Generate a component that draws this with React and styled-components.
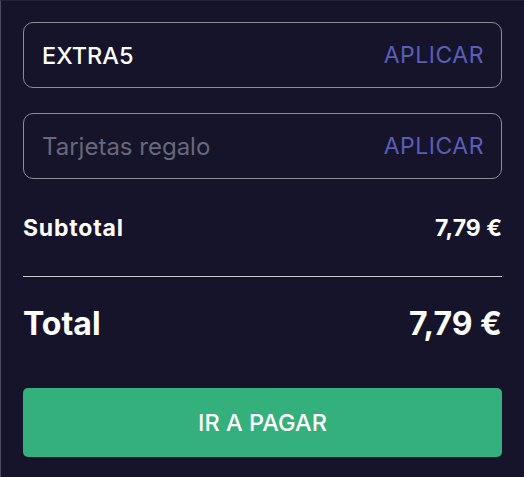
import styled, { createGlobalStyle } from "styled-components";

const GlobalStyle = createGlobalStyle`
  html, body {
    margin: 0;
    padding: 0;
    background: #15142a;
  }
  * {
    box-sizing: border-box;
  }
`;

const Panel = styled.div`
  width: 524px;
  height: 477px;
  background: #15142a;
  border-left: 1px solid #4a4960;
  border-top: 1px solid #23223a;
  padding: 21px 22px 0 22px;
  font-family: Inter, "Noto Sans", sans-serif;
  color: #ffffff;
  display: flex;
  flex-direction: column;
`;

const Fields = styled.div`
  display: flex;
  flex-direction: column;
  gap: 25px;
`;

const Field = styled.div`
  height: 66px;
  border: 1px solid #8c8c9c;
  border-radius: 10px;
  padding: 0 17px 0 18px;
  display: flex;
  align-items: center;
  justify-content: space-between;
`;

const Value = styled.span`
  font-size: ${(p) => (p.$placeholder ? 24 : 23.5)}px;
  font-weight: ${(p) => (p.$placeholder ? 400 : 500)};
  color: ${(p) => (p.$placeholder ? "#67687c" : "#ffffff")};
`;

const Apply = styled.span`
  font-size: 23px;
  color: #5a5eb8;
  letter-spacing: 0.5px;
`;

const Row = styled.div`
  display: flex;
  align-items: center;
  justify-content: space-between;
  height: ${(p) => p.$height}px;
  font-size: ${(p) => p.$size}px;
  font-weight: 700;
`;

const Label = styled.span`
  letter-spacing: ${(p) => p.$spacing || 0}px;
`;

const Divider = styled.hr`
  margin: 0;
  border: none;
  border-top: 1px solid #c8c8d0;
`;

const PayButton = styled.button`
  height: 69px;
  width: 100%;
  border: none;
  border-radius: 5px;
  background: #33b07c;
  color: #ffffff;
  font-family: Inter, "Noto Sans", sans-serif;
  font-size: 23.5px;
  font-weight: 500;
  cursor: pointer;
`;

export default function App() {
  return (
    <>
      <GlobalStyle />
      <Panel>
        <Fields>
          <Field>
            <Value>EXTRA5</Value>
            <Apply>APLICAR</Apply>
          </Field>
          <Field>
            <Value $placeholder>Tarjetas regalo</Value>
            <Apply>APLICAR</Apply>
          </Field>
        </Fields>
        <Row $height={34} $size={23} style={{ marginTop: 32 }}>
          <Label $spacing={0.8}>Subtotal</Label>
          <Label>7,79 €</Label>
        </Row>
        <Divider style={{ marginTop: 31 }} />
        <Row $height={40} $size={32} style={{ marginTop: 26 }}>
          <Label>Total</Label>
          <Label>7,79 €</Label>
        </Row>
        <PayButton style={{ marginTop: 45 }}>IR A PAGAR</PayButton>
      </Panel>
    </>
  );
}
